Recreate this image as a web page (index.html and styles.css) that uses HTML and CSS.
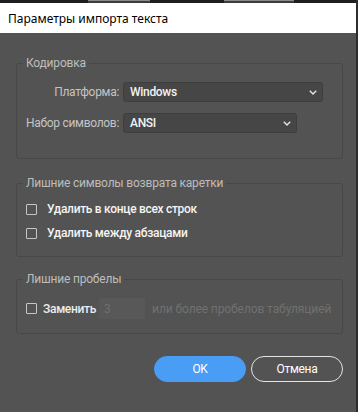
FILE: index.html
```html
<!DOCTYPE html>
<html lang="ru">
<head>
<meta charset="utf-8">
<title>Параметры импорта текста</title>
<link rel="stylesheet" href="styles.css">
</head>
<body>
<div class="window">
  <div class="tabstrip"><span class="tab tab-a"></span><span class="tab tab-b"></span></div>
  <div class="titlebar">Параметры импорта текста</div>
  <div class="dialog">
    <fieldset class="group group-enc">
      <legend>Кодировка</legend>
      <div class="field-grid">
        <label class="flabel">Платформа:</label>
        <div class="select select-platform">
          <span class="select-value">Windows</span>
          <svg class="chevron" width="8" height="5" viewBox="0 0 8 5"><path d="M0.8 0.8 L4 4 L7.2 0.8" fill="none" stroke="#e6e6e6" stroke-width="1.4"/></svg>
        </div>
        <label class="flabel">Набор символов:</label>
        <div class="select select-charset">
          <span class="select-value">ANSI</span>
          <svg class="chevron" width="8" height="5" viewBox="0 0 8 5"><path d="M0.8 0.8 L4 4 L7.2 0.8" fill="none" stroke="#e6e6e6" stroke-width="1.4"/></svg>
        </div>
      </div>
    </fieldset>

    <fieldset class="group group-cr">
      <legend>Лишние символы возврата каретки</legend>
      <label class="check"><span class="box"></span><span class="check-text">Удалить в конце всех строк</span></label>
      <label class="check"><span class="box"></span><span class="check-text">Удалить между абзацами</span></label>
    </fieldset>

    <fieldset class="group group-sp">
      <legend>Лишние пробелы</legend>
      <div class="replace-row">
        <label class="check check-tight"><span class="box"></span><span class="check-text">Заменить</span></label>
        <span class="num-input">3</span>
        <span class="muted">или более пробелов табуляцией</span>
      </div>
    </fieldset>

    <div class="buttons">
      <button class="btn btn-primary">OK</button>
      <button class="btn btn-outline">Отмена</button>
    </div>
  </div>
</div>
</body>
</html>
```
FILE: styles.css
```css
* { box-sizing: border-box; }
html, body { margin: 0; padding: 0; }
body {
  background: #535353;
  font-family: Roboto, "Liberation Sans", Arial, sans-serif;
  font-size: 12px;
  letter-spacing: -0.3px;
  white-space: nowrap;
}
.window {
  width: 358px;
  height: 412px;
  display: flex;
  flex-direction: column;
  border-right: 2px solid #2e2e2e;
}
.tabstrip {
  height: 3px;
  background: #1e1e1e;
  display: flex;
}
.tab {
  height: 3px;
  background: #3c3c3c;
  border-top: 1px solid #8a8a8a;
}
.tab-a { margin-left: 88px; width: 62px; }
.tab-b { margin-left: 74px; width: 70px; }
.titlebar {
  height: 30px;
  background: #ffffff;
  color: #000;
  font-family: "Noto Sans", "Liberation Sans", sans-serif;
  font-size: 12px;
  letter-spacing: 0;
  display: flex;
  align-items: center;
  padding-left: 8px;
}
.dialog {
  flex: 1;
  background: #535353;
  padding: 0 13px 0 16px;
  display: flex;
  flex-direction: column;
}
.group {
  margin: 0;
  border: 1px solid #484848;
  border-radius: 3px;
  padding: 0 8px 0 9px;
  min-width: 0;
}
.group legend {
  padding: 0 3px;
  margin-left: -3px;
  line-height: 14px;
  color: #bdbdbd;
  letter-spacing: -0.2px;
}
.group-enc { margin-top: 23px; padding-top: 12px; padding-bottom: 25px; }
.group-cr { margin-top: 17px; padding-top: 11px; padding-bottom: 15px; display: flex; flex-direction: column; gap: 8px; }
.group-sp { margin-top: 15px; padding-top: 12px; padding-bottom: 14px; }

.field-grid {
  display: grid;
  grid-template-columns: 93px auto;
  column-gap: 4px;
  row-gap: 11px;
  align-items: center;
  justify-items: start;
}
.flabel {
  justify-self: end;
  color: #c4c4c4;
}
.select {
  height: 20px;
  background: #464646;
  border: 1px solid #3e3e3e;
  border-radius: 3px;
  display: flex;
  align-items: center;
  justify-content: space-between;
  padding: 0 5px 0 6px;
  color: #f2f2f2;
  font-weight: 500;
}
.select-platform { width: 200px; }
.select-charset { width: 174px; }
.chevron { display: block; }

.check {
  display: flex;
  align-items: center;
  height: 16px;
  color: #f4f4f4;
  gap: 10px;
  font-weight: 500;
}
.check-tight { gap: 6px; color: #ececec; }
.box {
  width: 11px;
  height: 11px;
  border: 1px solid #c6c6c6;
  border-radius: 1px;
  flex: none;
}
.replace-row {
  display: flex;
  align-items: center;
  height: 21px;
}
.num-input {
  margin-left: 3px;
  width: 46px;
  height: 21px;
  background: #585858;
  border-radius: 2px;
  color: #6f6f6f;
  padding-left: 5px;
  display: flex;
  align-items: center;
}
.muted {
  margin-left: 7px;
  color: #707070;
  letter-spacing: -0.1px;
}
.buttons {
  margin-top: 22px;
  display: flex;
  justify-content: flex-end;
  gap: 5px;
}
.btn {
  width: 92px;
  height: 26px;
  border-radius: 13px;
  font-family: Roboto, "Liberation Sans", Arial, sans-serif;
  font-size: 12px;
  letter-spacing: -0.3px;
  color: #ffffff;
  padding: 0;
}
.btn-primary {
  background: #4a9df4;
  border: 1px solid #4a9df4;
}
.btn-outline {
  background: transparent;
  border: 1px solid #e4e4e4;
}
```
